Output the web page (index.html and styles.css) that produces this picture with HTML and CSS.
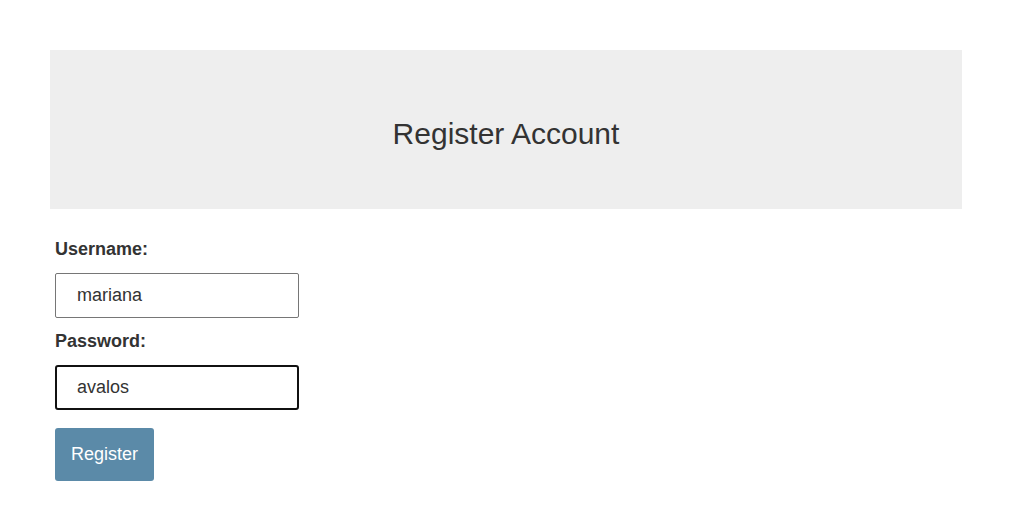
FILE: index.html
```html
<!DOCTYPE html>
<html>
<head>
<meta charset="utf-8">
<link rel="stylesheet" href="styles.css">
</head>
<body>
<div class="page">
  <header class="banner"><h1 class="title">Register Account</h1></header>
  <form class="form">
    <label class="label" for="u">Username:</label>
    <input class="field" id="u" type="text" value="mariana">
    <label class="label label-second" for="p">Password:</label>
    <input class="field field-focus" id="p" type="text" value="avalos">
    <button class="btn" type="button">Register</button>
  </form>
</div>
</body>
</html>
```
FILE: styles.css
```css
html, body { margin: 0; padding: 0; background: #fff; }
body { font-family: "Liberation Sans", Arial, sans-serif; color: #333; }
.page { padding: 50px 50px 0 50px; }
.banner {
  background: #eeeeee;
  height: 159px;
  box-sizing: border-box;
  padding-top: 8px;
  display: flex;
  align-items: center;
  justify-content: center;
}
.title { margin: 0; font-size: 30px; font-weight: normal; color: #333; line-height: 1; }
.form { display: flex; flex-direction: column; align-items: flex-start; padding: 30px 5px 0 5px; }
.label { display: block; font-size: 18px; font-weight: bold; line-height: 21px; color: #333; margin-bottom: 13px; }
.label-second { margin-top: 13px; }
.field {
  box-sizing: border-box;
  width: 244px;
  height: 45px;
  border: 1px solid #767676;
  border-radius: 2px;
  padding: 0 0 0 21px;
  font-family: "Liberation Sans", Arial, sans-serif;
  font-size: 18px;
  color: #333;
  outline: none;
  background: #fff;
}
.field-focus { border: 2px solid #111; border-radius: 3px; padding-left: 20px; }
.btn {
  margin-top: 18px;
  height: 53px;
  width: 99px;
  background: #5b8aa8;
  border: none;
  border-radius: 3px;
  color: #fff;
  font-family: "Liberation Sans", Arial, sans-serif;
  font-size: 18px;
  padding: 0;
}
```
